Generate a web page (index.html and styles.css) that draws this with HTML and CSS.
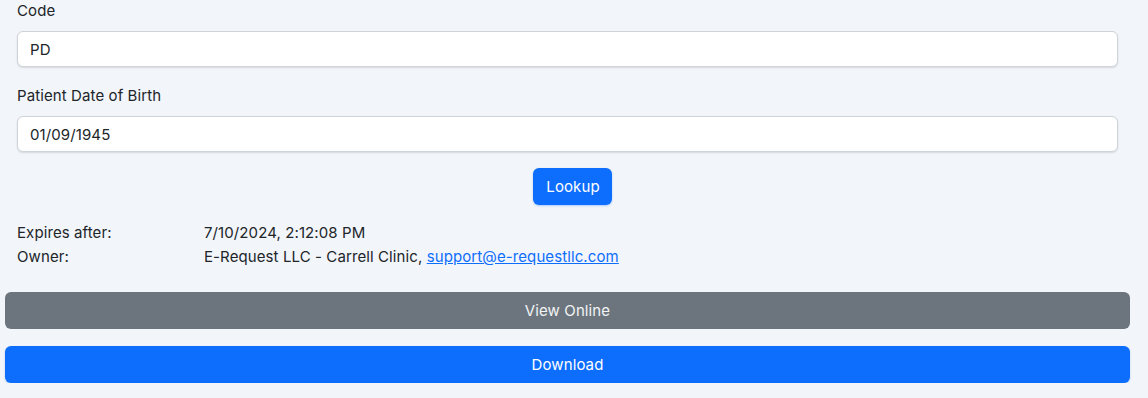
FILE: index.html
```html
<!DOCTYPE html>
<html lang="en">
<head>
<meta charset="utf-8">
<title>Document Lookup</title>
<link rel="stylesheet" href="styles.css">
</head>
<body>
<main class="page">
  <form class="lookup-form">
    <div class="field">
      <label class="field-label" for="code">Code</label>
      <input class="field-input" id="code" type="text" value="PD">
    </div>
    <div class="field">
      <label class="field-label" for="dob">Patient Date of Birth</label>
      <input class="field-input" id="dob" type="text" value="01/09/1945">
    </div>
    <div class="lookup-row">
      <button type="button" class="btn btn-primary btn-lookup">Lookup</button>
    </div>
    <dl class="info">
      <div class="info-row">
        <dt class="info-label">Expires after:</dt>
        <dd class="info-value">7/10/2024, 2:12:08 PM</dd>
      </div>
      <div class="info-row">
        <dt class="info-label">Owner:</dt>
        <dd class="info-value">E-Request LLC - Carrell Clinic, <a class="info-link" href="#">support@e-requestllc.com</a></dd>
      </div>
    </dl>
  </form>
  <div class="actions">
    <button type="button" class="btn btn-block btn-secondary">View Online</button>
    <button type="button" class="btn btn-block btn-primary">Download</button>
  </div>
</main>
</body>
</html>
```

FILE: styles.css
```css
* { box-sizing: border-box; }

html, body {
  margin: 0;
  padding: 0;
  background: #f2f5f9;
}

body {
  font-family: Inter, "Noto Sans", "Liberation Sans", sans-serif;
  font-size: 15px;
  letter-spacing: 0.1px;
  color: #212529;
}

.page {
  padding: 0 18px 0 5px;
}

.lookup-form {
  padding: 0 12px;
  margin: 0;
}

.field {
  display: flex;
  flex-direction: column;
  margin-bottom: 18px;
}

.field-label {
  line-height: 22px;
  margin-bottom: 9px;
}

.field-input {
  height: 36px;
  padding: 6px 12px;
  font: inherit;
  letter-spacing: inherit;
  color: #212529;
  background: #fff;
  border: 1px solid #ced4da;
  border-radius: 6px;
  box-shadow: 0 1px 2px rgba(0, 0, 0, 0.12);
  outline: none;
}

.lookup-row {
  display: flex;
  justify-content: center;
  margin-top: -2px;
  padding-left: 10px;
}

.btn {
  font: inherit;
  letter-spacing: inherit;
  line-height: 23px;
  padding: 7px 12px;
  border: none;
  border-radius: 6px;
  color: #fff;
  cursor: pointer;
}

.btn-lookup {
  padding: 7px 12px 7px 13px;
}

.btn-primary {
  background: #0d6efd;
  box-shadow: 0 1px 2px rgba(13, 110, 253, 0.3);
}

.btn-secondary {
  background: #6c757d;
  color: #f1f3f5;
}

.info {
  margin: 16px 0 0;
  padding: 0;
}

.info-row {
  display: flex;
  line-height: 24px;
}

.info-label {
  width: 187px;
  flex-shrink: 0;
  margin: 0;
}

.info-value {
  margin: 0;
}

.info-link {
  color: #0d6efd;
  text-decoration: underline;
}

.actions {
  display: flex;
  flex-direction: column;
  gap: 17px;
  margin-top: 23px;
}

.btn-block {
  width: 100%;
  height: 37px;
  padding: 0 12px;
}
```
